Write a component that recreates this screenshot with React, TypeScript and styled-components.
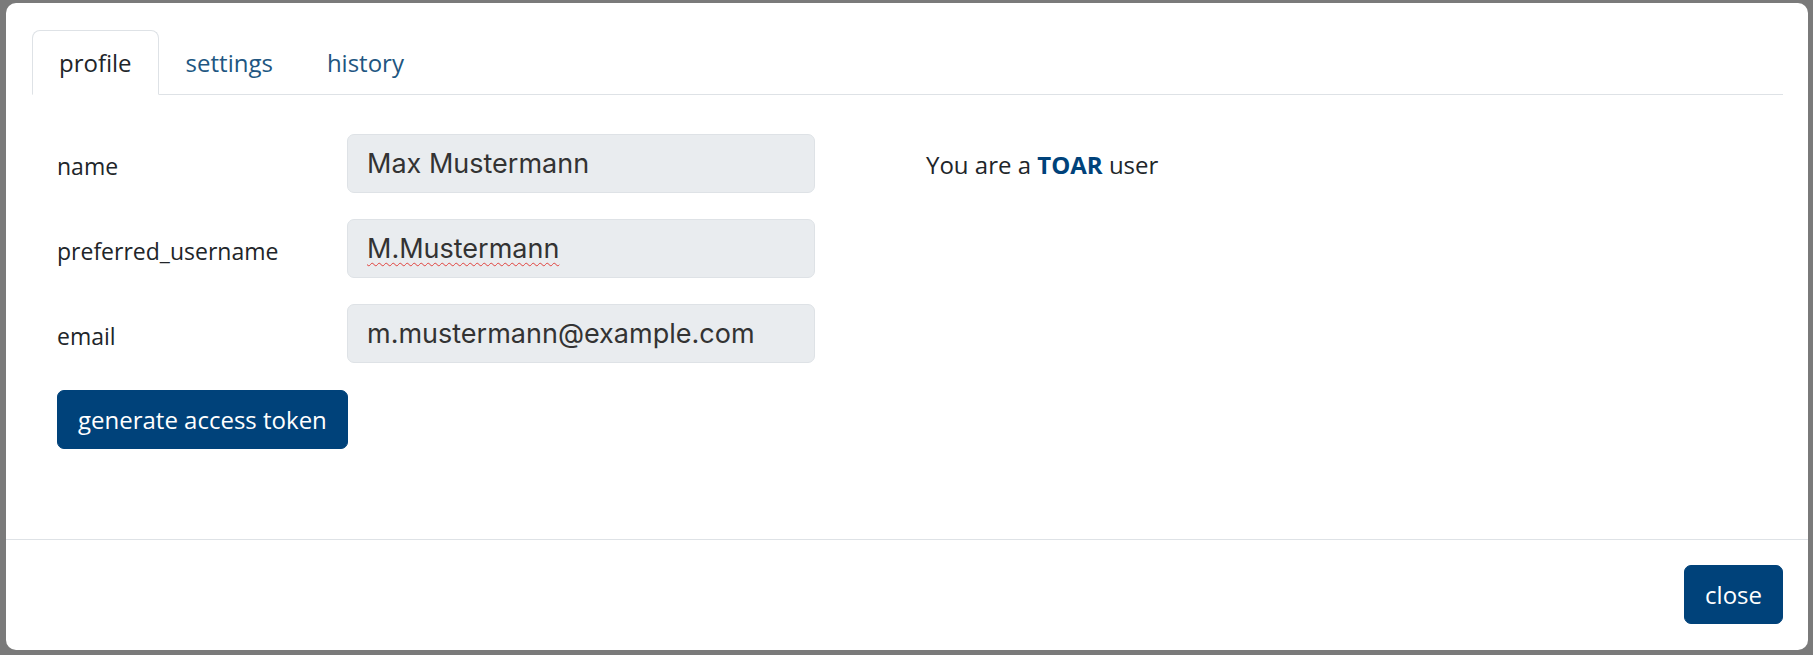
import React from 'react';
import styled, { createGlobalStyle } from 'styled-components';

const colors = {
    primary: '#00427a',
    link: '#215681',
    text: '#212529',
    border: '#dee2e6',
    fieldBg: '#e9ecef',
    backdrop: '#7a7a7a',
};

const GlobalStyle = createGlobalStyle`
    html, body {
        margin: 0;
        padding: 0;
        background: ${colors.backdrop};
    }

    body {
        font-family: "Open Sans", "Noto Sans", "Liberation Sans", sans-serif;
        color: ${colors.text};
    }
`

const Backdrop = styled.div`
    box-sizing: border-box;
    height: 655px;
    padding: 3px 5px 5px 6px;
    background: ${colors.backdrop};
`

const Modal = styled.div`
    height: 100%;
    display: flex;
    flex-direction: column;
    background: #fff;
    border-radius: 10px;
    overflow: hidden;
`

const ModalBody = styled.div`
    flex: 1;
    padding: 27px 25px 0 26px;
`

const TabList = styled.div`
    display: flex;
    border-bottom: 1px solid ${colors.border};
`

const Tab = styled.button<{ $active?: boolean }>`
    box-sizing: border-box;
    height: 65px;
    margin-bottom: -1px;
    padding: 0 26px;
    font-family: inherit;
    font-size: 24px;
    background: ${props => props.$active ? '#fff' : 'transparent'};
    color: ${props => props.$active ? colors.text : colors.link};
    border: 1px solid ${props => props.$active ? colors.border : 'transparent'};
    border-bottom-color: ${props => props.$active ? '#fff' : 'transparent'};
    border-radius: 8px 8px 0 0;
    cursor: pointer;
`

const Panel = styled.div`
    padding: 39px 0 0 25px;
`

const FormGrid = styled.div`
    display: grid;
    grid-template-columns: 290px 468px auto;
    grid-auto-rows: 59px;
    row-gap: 26px;
    align-items: center;
`

const Label = styled.label`
    font-size: 23px;
    padding-top: 4px;
`

const FieldBox = styled.div`
    box-sizing: border-box;
    height: 59px;
    display: flex;
    align-items: center;
    padding: 0 19px;
    background: ${colors.fieldBg};
    border: 1px solid ${colors.border};
    border-radius: 7px;
    font-family: "Inter", "Noto Sans", sans-serif;
    font-size: 27px;
    color: #333;
`

const Misspelt = styled.span`
    text-decoration: underline wavy #e0413c;
    text-decoration-thickness: 1px;
    text-underline-offset: 4px;
`

const RoleNote = styled.p`
    margin: 0 0 0 111px;
    font-size: 24px;
    padding-top: 2px;

    strong {
        color: ${colors.primary};
    }
`

const PrimaryButton = styled.button`
    box-sizing: border-box;
    height: 59px;
    padding: 0 20px;
    font-family: inherit;
    font-size: 24px;
    color: #fff;
    background: ${colors.primary};
    border: 1px solid ${colors.primary};
    border-radius: 7px;
    cursor: pointer;
`

const ButtonRow = styled.div`
    margin-top: 27px;
`

const ModalFooter = styled.div`
    display: flex;
    justify-content: flex-end;
    padding: 25px 25px 26px;
    border-top: 1px solid ${colors.border};
`

const App: React.FC = () => {
    const tabs = ['profile', 'settings', 'history'];
    const active = 'profile';

    return <>
        <GlobalStyle />
        <Backdrop>
            <Modal>
                <ModalBody>
                    <TabList>
                        {tabs.map(tab => <Tab key={tab} $active={tab === active}>{tab}</Tab>)}
                    </TabList>
                    <Panel>
                        <FormGrid>
                            <Label>name</Label>
                            <FieldBox>Max Mustermann</FieldBox>
                            <RoleNote>You are a <strong>TOAR</strong> user</RoleNote>

                            <Label>preferred_username</Label>
                            <FieldBox><Misspelt>M.Mustermann</Misspelt></FieldBox>
                            <span />

                            <Label>email</Label>
                            <FieldBox>m.mustermann@example.com</FieldBox>
                            <span />
                        </FormGrid>
                        <ButtonRow>
                            <PrimaryButton>generate access token</PrimaryButton>
                        </ButtonRow>
                    </Panel>
                </ModalBody>
                <ModalFooter>
                    <PrimaryButton>close</PrimaryButton>
                </ModalFooter>
            </Modal>
        </Backdrop>
    </>
}

export default App;
